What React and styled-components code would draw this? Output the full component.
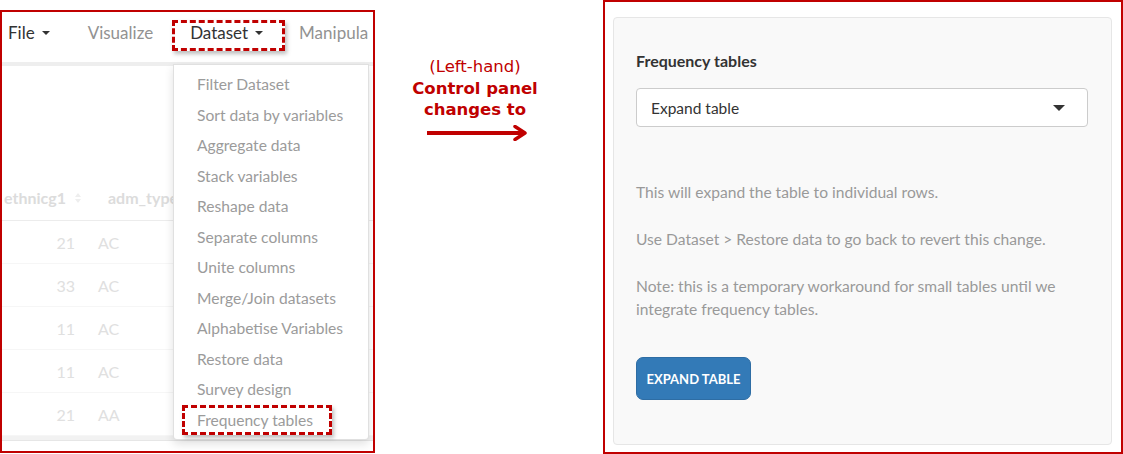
import styled, { createGlobalStyle } from "styled-components";

const GlobalStyle = createGlobalStyle`
  html, body {
    margin: 0;
    padding: 0;
    background: #ffffff;
  }
  body {
    font-family: Lato, "Liberation Sans", sans-serif;
  }
`;

const Page = styled.div`
  display: flex;
  align-items: flex-start;
  width: 1123px;
  height: 454px;
`;

const LeftShot = styled.div`
  position: relative;
  box-sizing: border-box;
  width: 375px;
  height: 443px;
  margin-top: 10px;
  border: 2px solid #c00000;
  overflow: hidden;
  background: #fff;
`;

const NavBar = styled.div`
  display: flex;
  align-items: flex-start;
  box-sizing: content-box;
  height: 42px;
  padding-top: 8px;
  border-bottom: 4px solid #eeeeee;
  white-space: nowrap;
  font-size: 17px;
  overflow: hidden;
`;

const NavItem = styled.div`
  display: flex;
  align-items: center;
  flex-shrink: 0;
  line-height: 20px;
  padding: 0 ${(p) => (p.$outlined ? "19px" : "16px")} 5px
    ${(p) => (p.$outlined ? "15px" : "16px")};
  margin-right: ${(p) => (p.$outlined ? "-5px" : "0")};
  border: 3px ${(p) => (p.$outlined ? "dashed #c00000" : "solid transparent")};
  box-shadow: ${(p) => (p.$outlined ? "2px 3px 4px rgba(0,0,0,0.25)" : "none")};
  color: ${(p) => (p.$active ? "#333333" : "#929292")};

  &:first-child {
    padding-left: 3px;
  }
`;

const Caret = styled.span`
  display: inline-block;
  width: 0;
  height: 0;
  margin-left: 7px;
  border-left: 4px solid transparent;
  border-right: 4px solid transparent;
  border-top: 4px solid ${(p) => p.color || "#333"};
`;

const Spacer = styled.div`
  height: 109px;
`;

const TableRow = styled.div`
  display: grid;
  grid-template-columns: 86px 1fr;
  align-items: center;
  box-sizing: border-box;
  height: ${(p) => (p.$head ? "46px" : "43px")};
  border-bottom: 1px solid ${(p) => (p.$head ? "#ececec" : "#f6f6f6")};
  font-size: 16px;
  font-weight: ${(p) => (p.$head ? 700 : 400)};
  color: ${(p) => (p.$head ? "#dcdcdc" : "#e0e0e0")};
`;

const NumCell = styled.div`
  text-align: right;
  padding-right: 13px;
`;

const HeadCell = styled.div`
  display: flex;
  align-items: center;
  padding-left: ${(p) => p.$pad || "2px"};
  gap: 9px;
`;

const TextCell = styled.div`
  padding-left: 10px;
`;

const SortIcon = styled.span`
  display: inline-flex;
  flex-direction: column;
  gap: 2px;

  &::before,
  &::after {
    content: "";
    width: 0;
    height: 0;
    border-left: 3px solid transparent;
    border-right: 3px solid transparent;
  }
  &::before {
    border-bottom: 4px solid #eeeeee;
  }
  &::after {
    border-top: 4px solid #eeeeee;
  }
`;

const ScrollBand = styled.div`
  height: 4px;
  background: #f2f2f2;
  border-bottom: 1px solid #e6e6e6;
`;

const Dropdown = styled.div`
  position: absolute;
  top: 52px;
  left: 171px;
  box-sizing: border-box;
  width: 196px;
  height: 376px;
  padding-top: 4px;
  background: #fff;
  border: 1px solid rgba(0, 0, 0, 0.12);
  border-radius: 0 0 4px 4px;
  box-shadow: 0 4px 10px rgba(0, 0, 0, 0.12);
`;

const MenuItem = styled.div`
  box-sizing: border-box;
  height: 30.5px;
  line-height: 24px;
  font-size: 15.6px;
  color: #9b9b9b;
  white-space: nowrap;
  padding-left: ${(p) => (p.$outlined ? "12px" : "23px")};
  margin-left: ${(p) => (p.$outlined ? "8px" : "0")};
  width: ${(p) => (p.$outlined ? "150px" : "auto")};
  border: 3px ${(p) => (p.$outlined ? "dashed #c00000" : "solid transparent")};
  border-left-width: ${(p) => (p.$outlined ? "3px" : "0")};
  box-shadow: ${(p) => (p.$outlined ? "2px 3px 4px rgba(0,0,0,0.25)" : "none")};
`;

const Middle = styled.div`
  width: 228px;
  padding-top: 56px;
`;

const Callout = styled.div`
  width: 200px;
  text-align: center;
  font-family: "DejaVu Sans", Verdana, sans-serif;
  font-size: 16.5px;
  line-height: 21.5px;
  color: #c00000;
`;

const Strong = styled.div`
  font-weight: 700;
`;

const Arrow = styled.svg`
  display: block;
  margin: 4px 0 0 51px;
`;

const RightShot = styled.div`
  display: flex;
  box-sizing: border-box;
  width: 520px;
  height: 454px;
  padding: 15px 9px 7px 8px;
  border: 2px solid #c00000;
  background: #fff;
`;

const Well = styled.div`
  flex: 1;
  box-sizing: border-box;
  padding: 33px 23px 0 22px;
  background: #f9f9f9;
  border: 1px solid #e6e6e6;
  border-radius: 4px;
  font-family: Lato, "Liberation Sans", sans-serif;
`;

const Label = styled.div`
  font-size: 16px;
  line-height: 20px;
  font-weight: 700;
  color: #333;
`;

const Select = styled.div`
  display: flex;
  align-items: center;
  justify-content: space-between;
  box-sizing: border-box;
  height: 39px;
  margin-top: 17px;
  padding: 0 22px 0 14px;
  background: #fff;
  border: 1px solid #cccccc;
  border-radius: 4px;
  font-size: 15.5px;
  color: #333;
`;

const SelectCaret = styled.span`
  width: 0;
  height: 0;
  border-left: 6px solid transparent;
  border-right: 6px solid transparent;
  border-top: 6px solid #333;
`;

const Note = styled.p`
  margin: ${(p) => p.$top || "24px"} 0 0;
  font-size: 15.6px;
  line-height: 23px;
  color: #999999;
`;

const Button = styled.button`
  display: block;
  margin-top: 36px;
  box-sizing: border-box;
  width: 115px;
  height: 43px;
  padding: 0;
  background: #337ab7;
  border: 1px solid #2e6da4;
  border-radius: 7px;
  color: #fff;
  font-family: Lato, "Liberation Sans", sans-serif;
  font-size: 13px;
  font-weight: 700;
  text-transform: uppercase;
`;

const menu = [
  "Filter Dataset",
  "Sort data by variables",
  "Aggregate data",
  "Stack variables",
  "Reshape data",
  "Separate columns",
  "Unite columns",
  "Merge/Join datasets",
  "Alphabetise Variables",
  "Restore data",
  "Survey design",
];

const rows = [
  ["21", "AC"],
  ["33", "AC"],
  ["11", "AC"],
  ["11", "AC"],
  ["21", "AA"],
];

export default function App() {
  return (
    <>
      <GlobalStyle />
      <Page>
        <LeftShot>
          <NavBar>
            <NavItem $active>
              File <Caret />
            </NavItem>
            <NavItem>Visualize</NavItem>
            <NavItem $active $outlined>
              Dataset <Caret />
            </NavItem>
            <NavItem>Manipula</NavItem>
          </NavBar>
          <Spacer />
          <TableRow $head>
            <HeadCell>
              ethnicg1 <SortIcon />
            </HeadCell>
            <HeadCell $pad="20px">adm_type</HeadCell>
          </TableRow>
          {rows.map(([n, t], i) => (
            <TableRow key={i}>
              <NumCell>{n}</NumCell>
              <TextCell>{t}</TextCell>
            </TableRow>
          ))}
          <ScrollBand />
          <Dropdown>
            {menu.map((m) => (
              <MenuItem key={m}>{m}</MenuItem>
            ))}
            <MenuItem $outlined>Frequency tables</MenuItem>
          </Dropdown>
        </LeftShot>

        <Middle>
          <Callout>
            <div>(Left-hand)</div>
            <Strong>Control panel</Strong>
            <Strong>changes to</Strong>
          </Callout>
          <Arrow width="104" height="16" viewBox="0 0 104 16">
            <line x1="1" y1="8" x2="99" y2="8" stroke="#c00000" strokeWidth="4" />
            <polyline
              points="89,1.5 99,8 89,14.5"
              fill="none"
              stroke="#c00000"
              strokeWidth="3.5"
              strokeLinecap="round"
              strokeLinejoin="round"
            />
          </Arrow>
        </Middle>

        <RightShot>
          <Well>
            <Label>Frequency tables</Label>
            <Select>
              Expand table
              <SelectCaret />
            </Select>
            <Note $top="54px">This will expand the table to individual rows.</Note>
            <Note>Use Dataset &gt; Restore data to go back to revert this change.</Note>
            <Note>
              Note: this is a temporary workaround for small tables until we
              integrate frequency tables.
            </Note>
            <Button>Expand table</Button>
          </Well>
        </RightShot>
      </Page>
    </>
  );
}
